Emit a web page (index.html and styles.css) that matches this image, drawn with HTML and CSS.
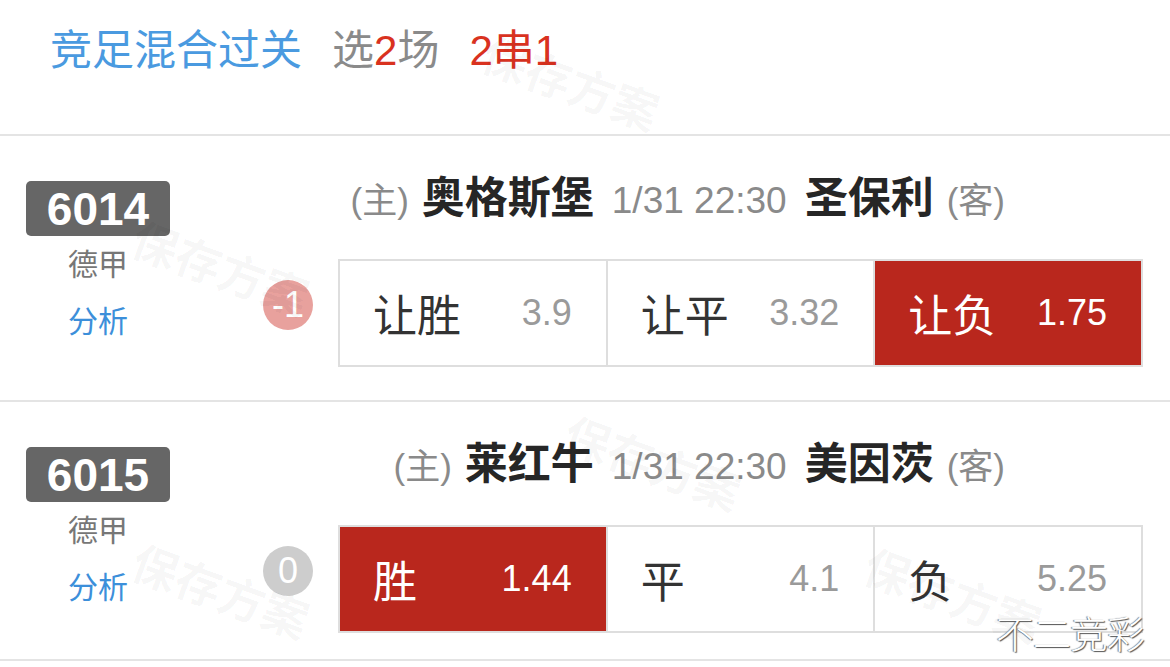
FILE: index.html
```html
<!DOCTYPE html>
<html lang="zh-CN">
<head>
    <meta charset="UTF-8">
    <meta name="viewport" content="width=device-width, initial-scale=1.0">
    <title>竞足混合过关</title>
    <link rel="stylesheet" href="styles.css">
</head>
<body>
    <div class="page">
        <div class="header">
            <span class="title">竞足混合过关</span>
            <span class="pick">选<em>2</em>场</span>
            <span class="combo">2串1</span>
        </div>

        <div class="match">
            <div class="info">
                <div class="num">6014</div>
                <div class="league">德甲</div>
                <div class="link">分析</div>
            </div>
            <div class="main">
                <div class="teams">
                    <span class="side">(主)</span>
                    <span class="team">奥格斯堡</span>
                    <span class="time">1/31 22:30</span>
                    <span class="team">圣保利</span>
                    <span class="side">(客)</span>
                </div>
                <div class="bet">
                    <div class="handicap minus">-1</div>
                    <div class="odds">
                        <div class="cell"><span class="label">让胜</span><span class="val">3.9</span></div>
                        <div class="cell"><span class="label">让平</span><span class="val">3.32</span></div>
                        <div class="cell selected"><span class="label">让负</span><span class="val">1.75</span></div>
                    </div>
                </div>
            </div>
        </div>

        <div class="match">
            <div class="info">
                <div class="num">6015</div>
                <div class="league">德甲</div>
                <div class="link">分析</div>
            </div>
            <div class="main">
                <div class="teams">
                    <span class="side">(主)</span>
                    <span class="team">莱红牛</span>
                    <span class="time">1/31 22:30</span>
                    <span class="team">美因茨</span>
                    <span class="side">(客)</span>
                </div>
                <div class="bet">
                    <div class="handicap">0</div>
                    <div class="odds">
                        <div class="cell selected"><span class="label">胜</span><span class="val">1.44</span></div>
                        <div class="cell"><span class="label">平</span><span class="val">4.1</span></div>
                        <div class="cell"><span class="label">负</span><span class="val">5.25</span></div>
                    </div>
                </div>
            </div>
        </div>

        <!-- watermarks -->
        <span class="wm wm1">保存方案</span>
        <span class="wm wm2">保存方案</span>
        <span class="wm wm3">保存方案</span>
        <span class="wm wm4">保存方案</span>
        <span class="wm wm5">保存方案</span>
        <span class="brand">不二竞彩</span>
    </div>
</body>
</html>
```

FILE: styles.css
```css
body {
    margin: 0;
    background: #fff;
    font-family: "Liberation Sans", "Noto Sans CJK SC", sans-serif;
}
.page {
    position: relative;
    width: 1170px;
    height: 667px;
    overflow: hidden;
}
.header {
    height: 113px;
    padding: 21px 0 0 50px;
    display: flex;
    align-items: flex-start;
    gap: 30px;
    font-size: 42px;
    line-height: 60px;
    border-bottom: 2px solid #e4e4e4;
}
.header .title {
    color: #4a9ae0;
}
.header .pick {
    color: #8a8a8a;
}
.header .pick em,
.header .combo {
    font-style: normal;
    color: #d9321f;
}
.match {
    display: flex;
    height: 264px;
    border-bottom: 2px solid #e4e4e4;
}
.match + .match {
    height: 257px;
}
.info {
    width: 196px;
    padding-top: 45px;
    display: flex;
    flex-direction: column;
    align-items: center;
}
.num {
    width: 144px;
    height: 55px;
    background: #666;
    border-radius: 5px;
    color: #fff;
    font-size: 46px;
    font-weight: bold;
    line-height: 56px;
    text-align: center;
}
.league,
.link {
    font-size: 30px;
    line-height: 57px;
    color: #777;
}
.link {
    color: #3c8fda;
}
.main {
    flex: 1;
    padding: 31px 27px 0 0;
}
.teams {
    display: flex;
    align-items: baseline;
    justify-content: flex-end;
    gap: 13px;
    padding-right: 138px;
    height: 62px;
    line-height: 62px;
}
.side {
    font-size: 35px;
    color: #8a8a8a;
}
.team {
    font-size: 43px;
    font-weight: bold;
    color: #262626;
}
.time {
    font-size: 37px;
    color: #8a8a8a;
    margin: 0 5px;
}
.bet {
    display: flex;
    align-items: flex-start;
    margin-top: 30px;
}
.handicap {
    width: 50px;
    height: 50px;
    margin: 21px 25px 0 67px;
    border-radius: 50%;
    background: #cdcdcd;
    color: #fff;
    font-size: 36px;
    line-height: 50px;
    text-align: center;
}
.handicap.minus {
    background: #e8a19d;
}
.odds {
    flex: 1;
    display: flex;
    height: 104px;
    border: 2px solid #dedede;
}
.cell {
    flex: 1;
    display: flex;
    align-items: center;
    justify-content: space-between;
    padding: 0 34px 0 33px;
}
.cell + .cell {
    border-left: 2px solid #dedede;
}
.label {
    font-size: 44px;
    color: #333;
}
.val {
    font-size: 36px;
    color: #9a9a9a;
}
.cell.selected {
    background: #b9271d;
}
.cell.selected .label,
.cell.selected .val {
    color: #fff;
}
.wm {
    position: absolute;
    font-size: 46px;
    font-weight: bold;
    line-height: 50px;
    color: rgba(0, 0, 0, 0.04);
    transform: rotate(20deg);
    white-space: nowrap;
    pointer-events: none;
}
.wm1 { left: 478px; top: 60px; }
.wm2 { left: 128px; top: 245px; }
.wm3 { left: 560px; top: 440px; }
.wm4 { left: 128px; top: 568px; }
.wm5 { left: 860px; top: 572px; }
.brand {
    position: absolute;
    left: 996px;
    top: 604px;
    font-size: 38px;
    font-weight: 300;
    color: #fff;
    letter-spacing: -1px;
    text-shadow: 1px 1px 1px #555, -1px 0 1px #777;
}
```
